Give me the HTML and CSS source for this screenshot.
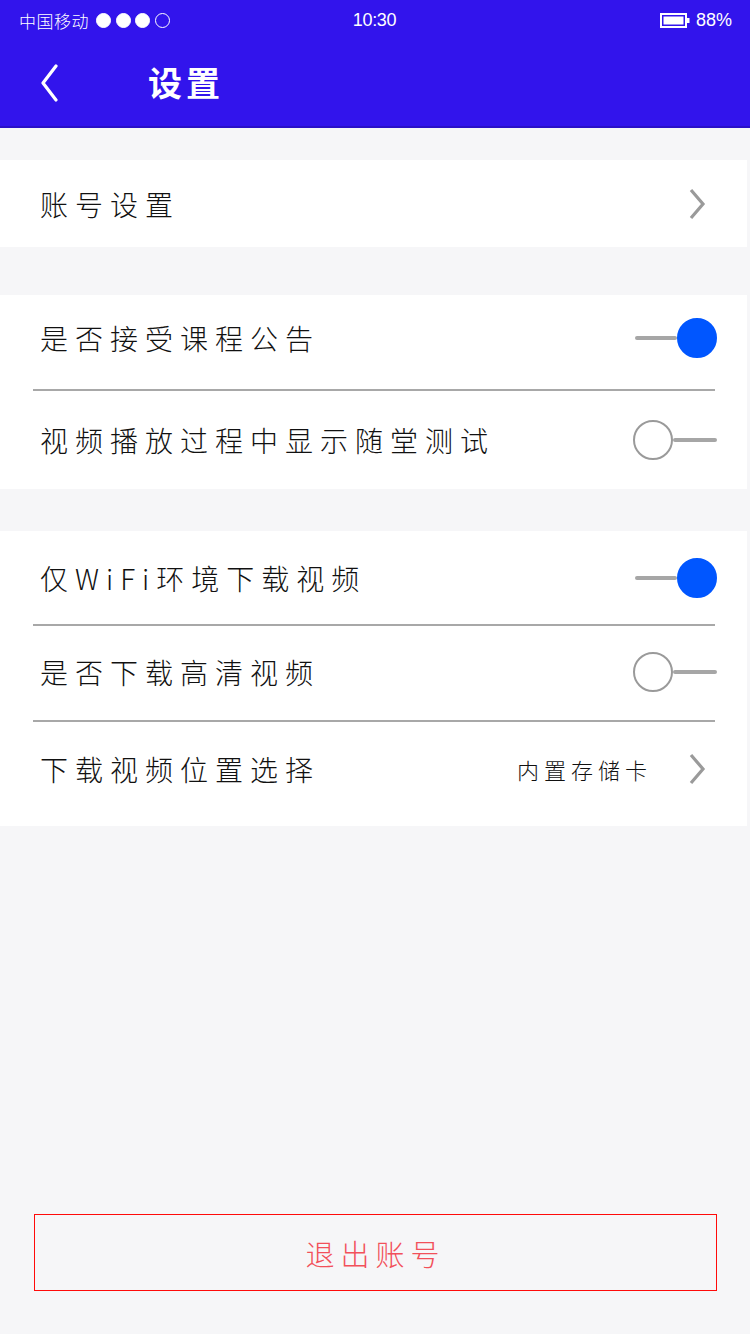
FILE: index.html
```html
<!DOCTYPE html>
<html lang="zh-CN">
<head>
<meta charset="utf-8">
<title>设置</title>
<link rel="stylesheet" href="styles.css">
</head>
<body>
<div class="page">
  <div class="topbar">
    <div class="status">
      <div class="status-left">
        <span class="carrier">中国移动</span>
        <span class="dot on"></span><span class="dot on"></span><span class="dot on"></span><span class="dot"></span>
      </div>
      <div class="status-time">10:30</div>
      <div class="status-right">
        <svg class="battery" width="30" height="15" viewBox="0 0 30 15">
          <rect x="1" y="1" width="25" height="13" fill="none" stroke="#fff" stroke-width="2"/>
          <rect x="3.5" y="3.5" width="20" height="8" fill="#fff"/>
          <rect x="27" y="5" width="2.5" height="5" fill="#fff"/>
        </svg>
        <span>88%</span>
      </div>
    </div>
    <div class="navbar">
      <svg class="back" width="20" height="38" viewBox="0 0 20 38">
        <path d="M16 2 L3 19 L16 36" fill="none" stroke="#fff" stroke-width="3.2" stroke-linecap="round" stroke-linejoin="round"/>
      </svg>
      <h1 class="title">设置</h1>
    </div>
  </div>

  <div class="section s1">
    <div class="row r-account">
      <span class="label">账号设置</span>
      <svg class="chev" width="18" height="32" viewBox="0 0 18 32"><path d="M3 2 L15 16 L3 30" fill="none" stroke="#9a9a9a" stroke-width="3.2"/></svg>
    </div>
  </div>

  <div class="section s2">
    <div class="row r-a">
      <span class="label">是否接受课程公告</span>
      <span class="toggle on"><span class="track"></span><span class="knob"></span></span>
    </div>
    <div class="divider"></div>
    <div class="row r-b">
      <span class="label">视频播放过程中显示随堂测试</span>
      <span class="toggle"><span class="knob"></span><span class="track"></span></span>
    </div>
  </div>

  <div class="section s3">
    <div class="row r-c">
      <span class="label">仅WiFi环境下载视频</span>
      <span class="toggle on"><span class="track"></span><span class="knob"></span></span>
    </div>
    <div class="divider"></div>
    <div class="row r-d">
      <span class="label">是否下载高清视频</span>
      <span class="toggle"><span class="knob"></span><span class="track"></span></span>
    </div>
    <div class="divider"></div>
    <div class="row r-e">
      <span class="label">下载视频位置选择</span>
      <span class="right">
        <span class="value">内置存储卡</span>
        <svg class="chev" width="18" height="32" viewBox="0 0 18 32"><path d="M3 2 L15 16 L3 30" fill="none" stroke="#9a9a9a" stroke-width="3.2"/></svg>
      </span>
    </div>
  </div>

  <div class="spacer"></div>

  <button class="logout">退出账号</button>
</div>
</body>
</html>
```

FILE: styles.css
```css
* { box-sizing: border-box; }
html, body { margin: 0; padding: 0; }
body {
  width: 750px;
  min-height: 1334px;
  background: #f6f6f8;
  font-family: "Noto Sans CJK SC", "Noto Sans", "Liberation Sans", sans-serif;
  color: #111;
}
.page {
  display: flex;
  flex-direction: column;
  min-height: 1334px;
}
.topbar {
  background: #3214ec;
  border-bottom: 2px solid #2a10c8;
  color: #fff;
}
.status {
  height: 40px;
  display: grid;
  grid-template-columns: 1fr auto 1fr;
  align-items: center;
  padding: 0 20px 0 19px;
  font-size: 17px;
}
.status-left { display: flex; align-items: center; }
.carrier { margin-right: 7px; letter-spacing: 0.5px; font-weight: 300; }
.dot {
  width: 15px; height: 15px;
  border-radius: 50%;
  border: 1.5px solid #fff;
  margin-right: 4.5px;
}
.dot.on { background: #fff; }
.status-time {
  font-family: "Liberation Sans", "Noto Sans", sans-serif;
  font-size: 18px;
  letter-spacing: -0.3px;
}
.status-right {
  justify-self: end;
  display: flex;
  align-items: center;
  gap: 6px;
  font-family: "Liberation Sans", sans-serif;
  font-size: 18px;
  margin-right: -2px;
}
.navbar {
  height: 86px;
  display: flex;
  align-items: center;
  padding-left: 40px;
  padding-bottom: 2px;
}
.back { display: block; margin-top: 2px; }
.title {
  margin: 0 0 0 88px;
  font-size: 34px;
  font-weight: 700;
  letter-spacing: 4px;
  line-height: 1;
}

.section {
  background: #fff;
  width: 747px;
}
.s1 { margin-top: 32px; }
.s2 { margin-top: 48px; }
.s3 { margin-top: 42px; }

.row {
  display: flex;
  align-items: center;
  justify-content: space-between;
  padding: 0 32px 0 40px;
}
.r-account { height: 87px; padding-right: 41px; }
.r-a { height: 94px; padding-bottom: 8px; }
.r-b { height: 98px; }
.r-c { height: 93px; }
.r-d { height: 94px; padding-bottom: 2px; }
.r-e { height: 104px; padding-right: 41px; padding-bottom: 10px; }

.label {
  font-size: 28px;
  letter-spacing: 7px;
  font-weight: 300;
  color: #111;
}
.divider {
  height: 2px;
  background: #a8a8a8;
  margin: 0 32px 0 33px;
}
.right { display: flex; align-items: center; }
.value {
  font-size: 22px;
  letter-spacing: 5px;
  margin-right: 36px;
  font-weight: 300;
  color: #111;
}
.chev { display: block; }

.toggle {
  display: flex;
  align-items: center;
  width: 84px;
  height: 40px;
  margin-right: -2px;
}
.toggle .track {
  flex: 1;
  height: 4px;
  border-radius: 2px;
  background: #a6a6a6;
}
.toggle .knob {
  width: 40px;
  height: 40px;
  border-radius: 50%;
  border: 2px solid #9a9a9a;
  background: #fff;
}
.toggle.on .knob {
  background: #0056ff;
  border-color: #0056ff;
}
.toggle.on .track { margin-left: 2px; }

.spacer { flex: 1; }
.logout {
  margin: 0 0 43px 34px;
  width: 683px;
  height: 77px;
  border: 1.5px solid #ff0a0a;
  background: transparent;
  color: #f2505a;
  font-family: "Noto Sans CJK SC", "Noto Sans", sans-serif;
  font-size: 29px;
  font-weight: 300;
  letter-spacing: 6px;
  padding-left: 6px;
}
```
